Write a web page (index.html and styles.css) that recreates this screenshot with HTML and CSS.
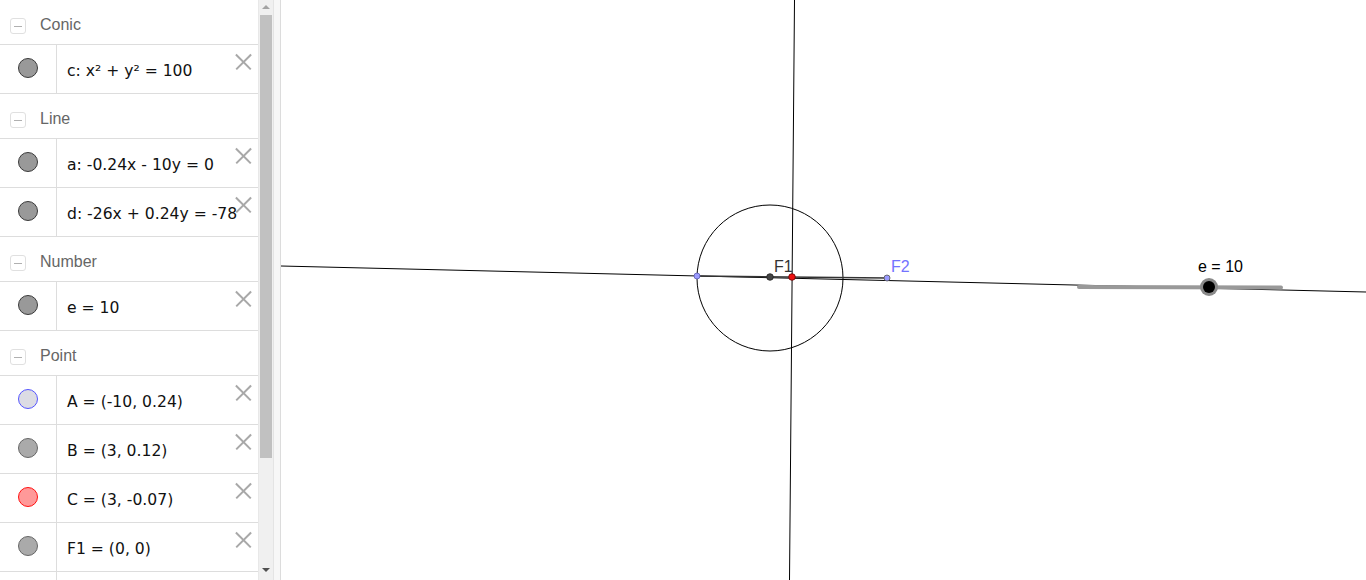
FILE: index.html
```html
<!DOCTYPE html>
<html>
<head>
<meta charset="utf-8">
<link rel="stylesheet" href="styles.css">
</head>
<body>
<div class="app">
  <div class="algebra">
    <div class="group"><span class="toggle"></span><span class="gname">Conic</span></div>
    <div class="item"><div class="mark"><span class="dot dark"></span></div><div class="expr">c: x² + y² = 100</div><span class="del"></span></div>
    <div class="group"><span class="toggle"></span><span class="gname">Line</span></div>
    <div class="item"><div class="mark"><span class="dot dark"></span></div><div class="expr">a: -0.24x - 10y = 0</div><span class="del"></span></div>
    <div class="item"><div class="mark"><span class="dot dark"></span></div><div class="expr">d: -26x + 0.24y = -78</div><span class="del"></span></div>
    <div class="group"><span class="toggle"></span><span class="gname">Number</span></div>
    <div class="item"><div class="mark"><span class="dot dark"></span></div><div class="expr">e = 10</div><span class="del"></span></div>
    <div class="group"><span class="toggle"></span><span class="gname">Point</span></div>
    <div class="item"><div class="mark"><span class="dot blue"></span></div><div class="expr">A = (-10, 0.24)</div><span class="del"></span></div>
    <div class="item"><div class="mark"><span class="dot light"></span></div><div class="expr">B = (3, 0.12)</div><span class="del"></span></div>
    <div class="item"><div class="mark"><span class="dot red"></span></div><div class="expr">C = (3, -0.07)</div><span class="del"></span></div>
    <div class="item"><div class="mark"><span class="dot light"></span></div><div class="expr">F1 = (0, 0)</div><span class="del"></span></div>
    <div class="item"><div class="mark"></div><div class="expr"></div></div>
  </div>
  <div class="scrollbar">
    <span class="arrow up"></span>
    <div class="thumb"></div>
    <span class="arrow down"></span>
  </div>
  <div class="splitter"></div>
  <div class="canvas">
    <svg class="graphics" width="1085" height="580" viewBox="0 0 1085 580">
      <line x1="0" y1="266" x2="1085" y2="292" stroke="#000" stroke-width="1"/>
      <line x1="513.5" y1="0" x2="508.5" y2="580" stroke="#000" stroke-width="1"/>
      <circle cx="489" cy="278" r="73" fill="none" stroke="#000" stroke-width="1"/>
      <line x1="416" y1="276" x2="606" y2="278" stroke="#333" stroke-width="1.4"/>
      <line x1="798" y1="287" x2="1000" y2="287.5" stroke="#999" stroke-width="4" stroke-linecap="round"/>
      <circle cx="416" cy="276" r="3" fill="#9a9aff" stroke="#5a5ab0" stroke-width="0.8"/>
      <circle cx="489" cy="277" r="3.3" fill="#444" stroke="#222" stroke-width="0.8"/>
      <circle cx="511" cy="277" r="3.3" fill="#ee1111" stroke="#600" stroke-width="0.8"/>
      <circle cx="606" cy="278" r="3" fill="#9a9aff" stroke="#555" stroke-width="0.8"/>
      <circle cx="928" cy="287" r="9" fill="#8a8a8a"/>
      <circle cx="928" cy="287" r="6" fill="#000"/>
      <text x="493" y="272" class="lbl">F1</text>
      <text x="610" y="272" class="lbl blue-lbl">F2</text>
      <text x="917" y="272" class="lbl black-lbl">e = 10</text>
    </svg>
  </div>
</div>
</body>
</html>
```
FILE: styles.css
```css
* { box-sizing: border-box; }
html, body { margin: 0; padding: 0; background: #fff; }
body { width: 1366px; height: 580px; overflow: hidden; }
.app { display: flex; height: 580px; }
.algebra {
  width: 258px;
  flex: none;
  height: 580px;
  overflow: hidden;
  font-family: "DejaVu Sans", sans-serif;
}
.group {
  height: 45px;
  display: flex;
  align-items: center;
  border-bottom: 1px solid #dddddd;
  padding-left: 10px;
  padding-top: 4px;
}
.toggle {
  position: relative;
  width: 16px;
  height: 16px;
  border: 1px solid #e0e0e0;
  border-radius: 3px;
  margin-top: 4px;
}
.toggle::after {
  content: "";
  position: absolute;
  left: 3px;
  top: 6.5px;
  width: 8px;
  height: 1px;
  background: #b0b0b0;
}
.gname {
  margin-left: 14px;
  font-family: "Liberation Sans", Arial, sans-serif;
  font-size: 16px;
  color: #666;
  margin-top: 2px;
}
.item {
  position: relative;
  height: 49px;
  display: flex;
  border-bottom: 1px solid #dddddd;
}
.mark {
  width: 57px;
  flex: none;
  border-right: 1px solid #dddddd;
  display: flex;
  justify-content: center;
  padding-top: 13px;
}
.dot {
  width: 20px;
  height: 20px;
  border-radius: 50%;
  border: 1px solid #444;
  background: #999;
}
.dot.dark { background: #999; border-color: #3a3a3a; }
.dot.light { background: #aaa; border-color: #666; }
.dot.blue { background: #dcdce4; border-color: #5555ff; }
.dot.red { background: #ff9999; border-color: #ff1111; }
.expr {
  padding-left: 10px;
  padding-top: 17px;
  font-size: 15.6px;
  color: #111;
  white-space: nowrap;
}
.del {
  position: absolute;
  right: 7px;
  top: 8px;
  width: 16px;
  height: 16px;
}
.del::before, .del::after {
  content: "";
  position: absolute;
  left: -2px;
  top: 7.5px;
  width: 21px;
  height: 1.5px;
  background: #a8a8a8;
  transform: rotate(45deg);
}
.del::after { transform: rotate(-45deg); }
.scrollbar {
  position: relative;
  width: 15px;
  flex: none;
  background: #f0f0f0;
  border-left: 1px solid #e8e8e8;
  padding: 15px 1px 0 1px;
}
.thumb {
  height: 443px;
  background: #c1c1c1;
}
.arrow {
  position: absolute;
  left: 3px;
  width: 0;
  height: 0;
  border-left: 4px solid transparent;
  border-right: 4px solid transparent;
}
.arrow.up { top: 5px; border-bottom: 4px solid #a3a3a3; }
.arrow.down { bottom: 8px; border-top: 4px solid #505050; }
.splitter {
  width: 8px;
  flex: none;
  background: #f7f7f7;
  border-left: 1px solid #e4e4e4;
  border-right: 1px solid #dcdcdc;
}
.canvas { flex: 1; height: 580px; overflow: hidden; }
.graphics { display: block; }
.lbl { font-family: "Liberation Sans", Arial, sans-serif; font-size: 16px; fill: #333; }
.blue-lbl { fill: #7373ff; }
.black-lbl { fill: #000; }
```
